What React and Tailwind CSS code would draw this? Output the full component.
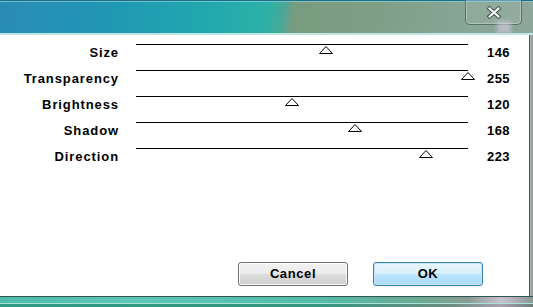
const rows = [
  { label: "Size", value: 146 },
  { label: "Transparency", value: 255 },
  { label: "Brightness", value: 120 },
  { label: "Shadow", value: 168 },
  { label: "Direction", value: 223 },
];

function Thumb({ value }) {
  // track is 332px wide, values run 0..255
  const left = (value / 255) * 332 - 7;
  return (
    <svg
      className="absolute top-[1px]"
      style={{ left }}
      width="14"
      height="8"
      viewBox="0 0 14 8"
    >
      <polygon points="7,0.5 13.5,7.5 0.5,7.5" fill="white" stroke="black" strokeWidth="1" />
    </svg>
  );
}

function Row({ label, value }) {
  return (
    <div className="flex h-[26px] items-start">
      <div className="w-[119px] h-[18px] text-right text-[13px] leading-[18px] font-bold tracking-[0.9px] text-black">
        {label}
      </div>
      <div className="relative ml-[17px] w-[332px] h-[26px] border-t border-black">
        <Thumb value={value} />
      </div>
      <div className="ml-[19px] h-[18px] text-[13px] leading-[18px] font-bold tracking-[0.4px] text-black">
        {value}
      </div>
    </div>
  );
}

function WinButton({ children, primary }) {
  return (
    <button
      className={
        primary
          ? "w-[110px] h-[24px] rounded-[3px] border border-[#3c7fb1] bg-[linear-gradient(to_bottom,#eaf6fd_0%,#d9f0fc_50%,#bee6fd_51%,#a7d9f5_100%)] text-[13px] font-bold tracking-[0.6px] text-black shadow-[inset_0_0_0_1px_#c6e6f7]"
          : "w-[110px] h-[24px] rounded-[3px] border border-[#707070] bg-[linear-gradient(to_bottom,#f2f2f2_0%,#ebebeb_50%,#dddddd_51%,#cfcfcf_100%)] text-[13px] font-bold tracking-[0.6px] text-black shadow-[inset_0_0_0_1px_#fcfcfc]"
      }
    >
      {children}
    </button>
  );
}

export default function App() {
  return (
    <div
      className="w-[533px] h-[307px] flex flex-col overflow-hidden bg-white"
      style={{ fontFamily: '"Liberation Sans", Arial, sans-serif' }}
    >
      {/* title bar */}
      <div className="relative h-[35px] shrink-0 bg-[linear-gradient(98deg,#2a8cb6_0%,#2096b4_20%,#20a8ae_38%,#2cb0a6_50%,#4aa898_53%,#789c80_55%,#7f9e86_70%,#86a694_85%,#8ea69c_100%)] border-t border-[#1f6e85] border-b-[2px] border-b-[#bfe6e4]">
        <div className="absolute left-0 right-0 top-0 h-px bg-[#8fd2dc]/70" />
        <div className="absolute right-[11px] top-[-1px] w-[57px] h-[25px] rounded-b-[5px] border border-t-0 border-[#5a6d66] bg-white/5 shadow-[inset_0_0_0_1px_rgba(255,255,255,0.3)] flex items-center justify-center">
          <svg width="16" height="13" viewBox="0 0 16 13">
            <path d="M3.5 2.5 L12.5 10.5 M12.5 2.5 L3.5 10.5" stroke="#4a5654" strokeWidth="4.2" strokeLinecap="square" />
            <path d="M3.5 2.5 L12.5 10.5 M12.5 2.5 L3.5 10.5" stroke="white" strokeWidth="2" strokeLinecap="square" />
          </svg>
        </div>
        <div className="absolute right-[22px] bottom-0 w-[14px] h-[12px] bg-[#d9cfe2]/60 blur-[2px]" />
      </div>

      {/* body */}
      <div className="flex flex-1">
        <div className="flex-1 flex flex-col bg-white pt-[9px]">
          {rows.map((r) => (
            <Row key={r.label} label={r.label} value={r.value} />
          ))}
          <div className="flex justify-end gap-[25px] pr-[46px] mt-[88px]">
            <WinButton>Cancel</WinButton>
            <WinButton primary>OK</WinButton>
          </div>
        </div>
        <div className="w-[4px] border-l border-[#4a5a58] bg-[linear-gradient(to_right,#a9b3b1,#8f9795)]" />
      </div>

      {/* bottom frame */}
      <div className="h-[11px] shrink-0 flex flex-col border-t border-[#2f5552]">
        <div className="h-[6px] bg-[linear-gradient(to_right,#4fbaa8_0%,#5ec6b6_25%,#52bba8_60%,#6fa892_80%,#8b9c94_88%,#c8c0d0_94%,#8c9894_100%)]" />
        <div className="h-px bg-[#a9e2d6]" />
        <div className="flex-1 bg-[linear-gradient(to_right,#2f9a84_0%,#34967f_60%,#6d8c80_85%,#a8a0b0_94%,#6e7c78_100%)]" />
      </div>
    </div>
  );
}
